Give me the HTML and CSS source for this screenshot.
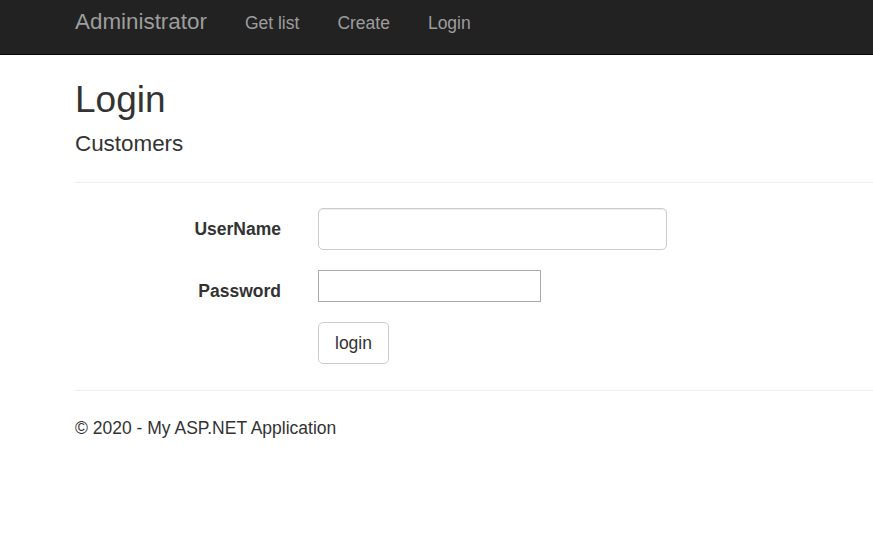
FILE: index.html
```html
<!DOCTYPE html>
<html lang="en">
<head>
<meta charset="utf-8">
<title>Login</title>
<link rel="stylesheet" href="styles.css">
</head>
<body>
<header class="navbar">
  <nav class="navbar-inner">
    <a class="brand" href="#">Administrator</a>
    <a class="nav-link" href="#">Get list</a>
    <a class="nav-link" href="#">Create</a>
    <a class="nav-link" href="#">Login</a>
  </nav>
</header>
<main class="content">
  <h1 class="title">Login</h1>
  <h4 class="subtitle">Customers</h4>
  <hr class="rule rule-top">
  <form class="login-form">
    <div class="form-row">
      <label class="form-label" for="username">UserName</label>
      <input class="form-control" id="username" type="text">
    </div>
    <div class="form-row">
      <label class="form-label" for="password">Password</label>
      <input class="plain-input" id="password" type="password">
    </div>
    <div class="form-row">
      <span class="form-label"></span>
      <button class="btn" type="button">login</button>
    </div>
  </form>
  <hr class="rule rule-bottom">
  <footer class="footer">
    <p class="footer-text">© 2020 - My ASP.NET Application</p>
  </footer>
</main>
</body>
</html>
```

FILE: styles.css
```css
* {
  box-sizing: border-box;
}

html, body {
  margin: 0;
  padding: 0;
}

body {
  font-family: "Liberation Sans", Arial, sans-serif;
  font-size: 17.5px;
  line-height: 1.42857;
  color: #333;
  background: #fff;
}

.navbar {
  background: #222;
  border-bottom: 1px solid #080808;
  height: 55px;
}

.navbar-inner {
  display: flex;
  align-items: baseline;
  gap: 38px;
  padding: 11px 0 0 75px;
}

.brand,
.nav-link {
  color: #9d9d9d;
  text-decoration: none;
  line-height: 1;
}

.brand {
  font-size: 22.4px;
}

.nav-link {
  font-size: 17.5px;
}

.content {
  padding-left: 75px;
}

.title {
  margin: 25px 0 0;
  font-size: 37px;
  font-weight: 500;
  line-height: 1.1;
}

.subtitle {
  margin: 11px 0 0;
  font-size: 22.4px;
  font-weight: 500;
  line-height: 1.1;
}

.rule {
  border: 0;
  border-top: 1px solid #eee;
  margin: 0;
  height: 0;
}

.rule-top {
  margin-top: 26px;
}

.login-form {
  display: flex;
  flex-direction: column;
  gap: 20px;
  padding-top: 25px;
}

.form-row {
  display: flex;
  align-items: flex-start;
  gap: 37px;
}

.form-label {
  width: 206px;
  height: 32px;
  text-align: right;
  font-weight: bold;
  padding-top: 9px;
  white-space: nowrap;
}

.form-control {
  width: 349px;
  height: 42px;
  border: 1px solid #ccc;
  border-radius: 5px;
  box-shadow: inset 0 1px 1px rgba(0, 0, 0, 0.075);
  font: inherit;
  padding: 7px 15px;
  margin: 0;
}

.plain-input {
  width: 223px;
  height: 32px;
  border: 1px solid #a9a9a9;
  border-radius: 0;
  font: inherit;
  margin: 0;
  padding: 1px 2px;
}

.btn {
  height: 42px;
  padding: 0 16px;
  border: 1px solid #ccc;
  border-radius: 5px;
  background: #fff;
  color: #333;
  font: inherit;
  line-height: 1;
  margin: 0;
}

.rule-bottom {
  margin-top: 26px;
}

.footer-text {
  margin: 25px 0 0;
}
```
